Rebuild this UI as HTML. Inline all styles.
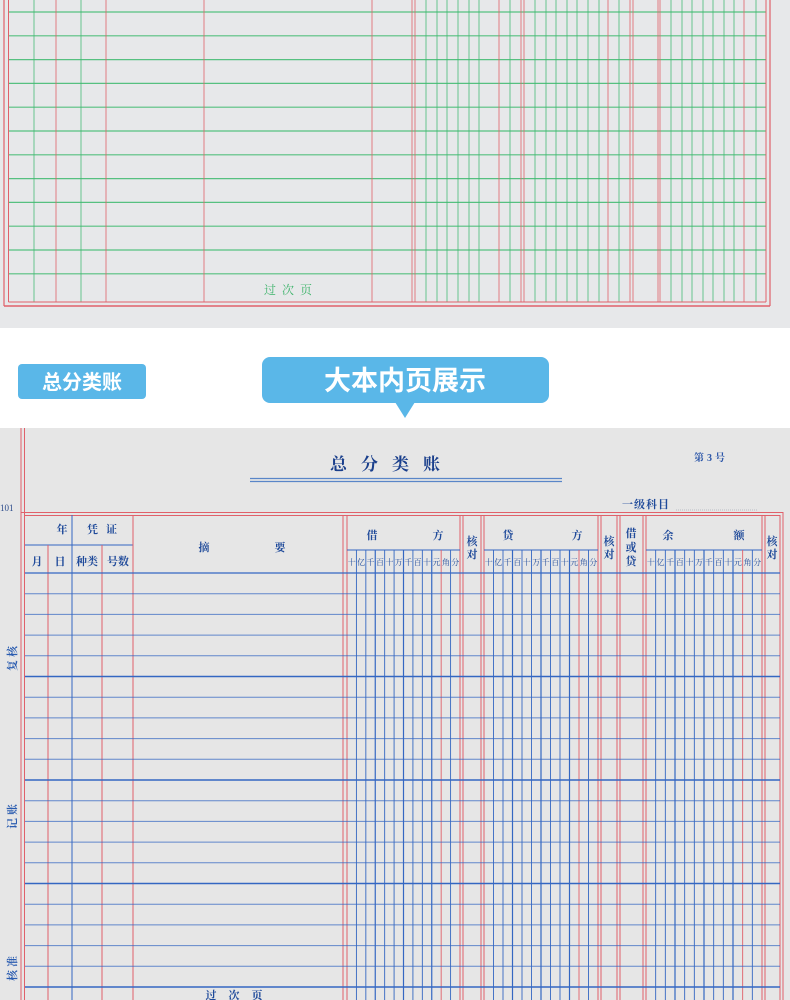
<!DOCTYPE html>
<html><head><meta charset="utf-8">
<style>
html,body{margin:0;padding:0;width:790px;height:1000px;overflow:hidden;background:#fff;}
svg{display:block;}
text{font-family:"Liberation Serif","Noto Serif CJK SC","Noto Sans CJK SC",serif;}
.b{font-family:"Liberation Sans","Noto Sans CJK SC",sans-serif;font-weight:bold;}
</style></head><body>
<svg id="s" width="790" height="1000" viewBox="0 0 790 1000" xmlns="http://www.w3.org/2000/svg">
<rect x="0" y="0" width="790" height="328" fill="#e7e8ea"/>
<rect x="0" y="328" width="790" height="100" fill="#ffffff"/>
<rect x="0" y="428" width="790" height="572" fill="#e6e6e6"/>
<g id="g"></g>
<text x="291" y="294" font-size="12" fill="#3cb36a" text-anchor="middle" letter-spacing="6">过次页</text>
<rect x="18" y="364" width="128" height="35" rx="4" fill="#5ab7e8"/>
<text class="b" x="82" y="389" font-size="20" fill="#fff" text-anchor="middle">总分类账</text>
<rect x="262" y="357" width="287" height="46" rx="8" fill="#5ab7e8"/>
<polygon points="395,402 415,402 405,418" fill="#5ab7e8"/>
<text class="b" x="405" y="390" font-size="27" fill="#fff" text-anchor="middle">大本内页展示</text>
<text x="392" y="470" font-size="17" font-weight="bold" fill="#1a3f8c" text-anchor="middle" letter-spacing="14">总分类账</text>
<line x1="250" y1="478.5" x2="562" y2="478.5" stroke="#5a86c8" stroke-width="1.2"/>
<line x1="250" y1="481.5" x2="562" y2="481.5" stroke="#5a86c8" stroke-width="1.2"/>
<text x="711" y="461" font-size="10" font-weight="bold" fill="#2a55a8" text-anchor="middle" letter-spacing="3">第3号</text>
<text x="0" y="511" font-size="9" fill="#2a4a8a" font-family="Liberation Sans,sans-serif">101</text>
<text x="622" y="508" font-size="11" font-weight="bold" fill="#1f4a9a" letter-spacing="1">一级科目</text>
<line x1="676" y1="510" x2="758" y2="510" stroke="#b8bcc4" stroke-width="1" stroke-dasharray="1,1"/>
<g font-size="11" font-weight="bold" fill="#1f4a9a" text-anchor="middle">
<text x="62" y="533">年</text>
<text x="106" y="533" letter-spacing="8">凭证</text>
<text x="37" y="565">月</text>
<text x="60" y="565">日</text>
<text x="87" y="565">种类</text>
<text x="118" y="565">号数</text>
<text x="204" y="551">摘</text>
<text x="280" y="551">要</text>
<text x="372" y="539">借</text>
<text x="438" y="539">方</text>
<text x="508" y="539">贷</text>
<text x="577" y="539">方</text>
<text x="668" y="539">余</text>
<text x="739" y="539">额</text>
<text x="472" y="545">核</text><text x="472" y="558">对</text>
<text x="609" y="545">核</text><text x="609" y="558">对</text>
<text x="772" y="545">核</text><text x="772" y="558">对</text>
<text x="631" y="537">借</text><text x="631" y="551">或</text><text x="631" y="565">贷</text>
</g>
<g id="sub" font-size="8" fill="#1f4a9a" text-anchor="middle"></g>
<g font-size="11" font-weight="bold" fill="#2a5cb0" text-anchor="middle">
<text transform="translate(16,657) rotate(-90)" letter-spacing="3">复核</text>
<text transform="translate(16,815) rotate(-90)" letter-spacing="3">记账</text>
<text transform="translate(16,967) rotate(-90)" letter-spacing="3">核准</text>
</g>
<text x="240" y="999" font-size="11" font-weight="bold" fill="#1f4a9a" text-anchor="middle" letter-spacing="12">过次页</text>
</svg>
<script>
var g=document.getElementById('g'),NS='http://www.w3.org/2000/svg';
function L(x1,y1,x2,y2,c,w,o){var e=document.createElementNS(NS,'line');e.setAttribute('x1',x1);e.setAttribute('y1',y1);e.setAttribute('x2',x2);e.setAttribute('y2',y2);e.setAttribute('stroke',c);e.setAttribute('stroke-width',w||1);if(o)e.setAttribute('opacity',o);g.appendChild(e);}
var R='#e0606a',G='#3dba6e',B='#3467c2';
var i;
for(i=0;i<12;i++){var y=12+23.8*i;L(9,y,766,y,G,1.2,0.85);}
[34,81,426,437,447,458,469,479,510,535,546,556,567,577,588,599,619,671,682,692,703,713,724,734,756].forEach(function(x){L(x,0,x,302,G,1,0.75);});
[56,106,204,372,412,415,499,521,524,608,630,633,658,660,744].forEach(function(x){L(x,0,x,302,R,1,0.8);});
L(8.5,0,8.5,302,R,1);L(766,0,766,302,R,1);L(8.5,302,766,302,R,1);
L(4,0,4,306,R,1.2);L(770,0,770,306,R,1.2);L(4,306,770,306,R,1.5);
L(21,428,21,1000,R,1);L(24.5,428,24.5,1000,R,1);
L(21,512.5,783,512.5,R,1);L(24.5,515.5,780,515.5,R,1);
L(780,515,780,1000,R,1);L(783,512,783,1000,R,1);
L(25,545,133,545,B,1);
L(72,515,72,1000,B,1);
[48,102].forEach(function(x){L(x,545,x,1000,R,1);});
[133,343,347,460,463,481,484,598,601,617,620,643,646,762,765].forEach(function(x){L(x,515,x,1000,R,1);});
var lab='十亿千百十万千百十元角分',sub=document.getElementById('sub');
[[347,460],[484,598],[646,762]].forEach(function(p){
 var s=p[0],e=p[1],w=(e-s)/12;
 L(s,550,e,550,B,1);
 for(var k=1;k<12;k++){var x=s+w*k;L(x,550,x,1000,k==10?R:B,k%3==0?1.2:0.9);}
 for(k=0;k<12;k++){var t=document.createElementNS(NS,'text');t.setAttribute('x',s+w*k+w/2);t.setAttribute('y',565);t.textContent=lab[k];sub.appendChild(t);}
});
L(25,573,780,573,B,1.3);
for(i=1;i<=21;i++){var y=573+20.7*i;if(y>1000)break;L(25,y,780,y,B,i%5==0?1.4:1,i%5==0?1:0.75);}
</script>
</body></html>
